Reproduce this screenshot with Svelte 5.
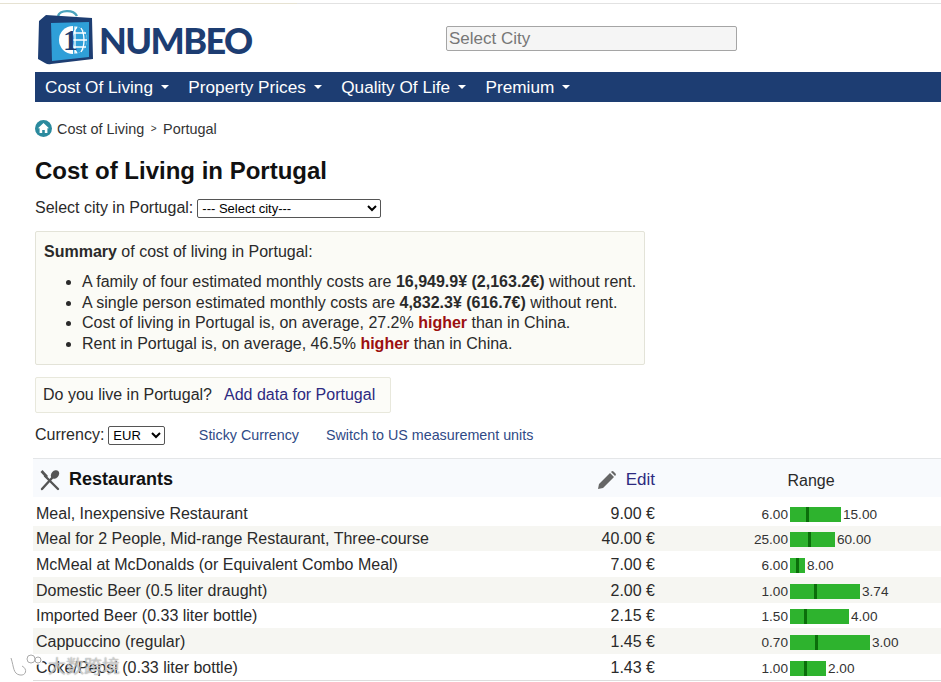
<script>
  const nav = ['Cost Of Living', 'Property Prices', 'Quality Of Life', 'Premium'];
  const rows = [
    { name: 'Meal, Inexpensive Restaurant', price: '9.00', lo: '6.00', hi: '15.00', w: 51, m: 16 },
    { name: 'Meal for 2 People, Mid-range Restaurant, Three-course', price: '40.00', lo: '25.00', hi: '60.00', w: 45, m: 18 },
    { name: 'McMeal at McDonalds (or Equivalent Combo Meal)', price: '7.00', lo: '6.00', hi: '8.00', w: 15, m: 6 },
    { name: 'Domestic Beer (0.5 liter draught)', price: '2.00', lo: '1.00', hi: '3.74', w: 70, m: 24 },
    { name: 'Imported Beer (0.33 liter bottle)', price: '2.15', lo: '1.50', hi: '4.00', w: 59, m: 14 },
    { name: 'Cappuccino (regular)', price: '1.45', lo: '0.70', hi: '3.00', w: 80, m: 25 },
    { name: 'Coke/Pepsi (0.33 liter bottle)', price: '1.43', lo: '1.00', hi: '2.00', w: 36, m: 14 }
  ];
  const bullets = [
    { a: 'A family of four estimated monthly costs are ', b: '16,949.9¥ (2,163.2€)', c: ' without rent.' },
    { a: 'A single person estimated monthly costs are ', b: '4,832.3¥ (616.7€)', c: ' without rent.' },
    { a: 'Cost of living in Portugal is, on average, 27.2% ', h: 'higher', c: ' than in China.' },
    { a: 'Rent in Portugal is, on average, 46.5% ', h: 'higher', c: ' than in China.' }
  ];
</script>

<div class="page">
  <div class="topline"></div>
  <header class="head">
    <div class="brand">
      <svg class="logo" width="60" height="60" viewBox="0 0 60 60" aria-hidden="true">
        <path d="M23 9 C25 3 38 2 42 9" fill="none" stroke="#4aa3bd" stroke-width="2.4"/>
        <path d="M4 14 L11 8 L57 11 L58 52 L16 57 Q13 58 10 56 L3 52 Z" fill="#1d3d72"/>
        <path d="M16 16 L54 15 L54 50 L17 54 Z" fill="#2f9fd8"/>
        <circle cx="38" cy="33" r="14" fill="#fff"/>
        <path d="M38 19 A14 14 0 0 1 38 47 Z" fill="#2f9fd8"/>
        <path d="M42 20 C36 27 36 39 42 46 M40 19.500 V46.500 M38 26 H51 M38 33 H52 M38 40 H51 M46 21 C50 27 50 39 46 45" fill="none" stroke="#fff" stroke-width="1.300"/>
        <text x="28" y="43" class="logo-one">1</text>
      </svg>
      <span class="wordmark">NUMBEO</span>
    </div>
    <div class="search">Select City</div>
  </header>

  <nav class="nav">
    {#each nav as item}
      <span class="nav-item">{item}<i class="caret"></i></span>
    {/each}
  </nav>

  <div class="crumbs">
    <svg width="17" height="17" viewBox="0 0 17 17" aria-hidden="true">
      <circle cx="8.500" cy="8.500" r="8.500" fill="#2b8a9e"/>
      <path d="M8.500 3 L14 8.200 H12.400 V13 H9.800 V10 H7.200 V13 H4.600 V8.200 H3 Z" fill="#fff"/>
    </svg>
    <span class="crumb">Cost of Living</span><span class="sep">&gt;</span><span>Portugal</span>
  </div>

  <h1>Cost of Living in Portugal</h1>

  <div class="city-line">
    <span>Select city in Portugal:</span>
    <select class="city"><option>--- Select city---</option></select>
  </div>

  <section class="summary">
    <div><b>Summary</b> of cost of living in Portugal:</div>
    <ul>
      {#each bullets as x}
        <li>{x.a}{#if x.b}<b>{x.b}</b>{/if}{#if x.h}<b class="hot">{x.h}</b>{/if}{x.c}</li>
      {/each}
    </ul>
  </section>

  <div class="live">Do you live in Portugal?<a href="#add">Add data for Portugal</a></div>

  <div class="currency">
    <span>Currency:</span>
    <select class="cur"><option>EUR</option></select>
    <a class="small first" href="#sticky">Sticky Currency</a>
    <a class="small" href="#us">Switch to US measurement units</a>
  </div>

  <section class="table">
    <div class="thead">
      <div class="title">
        <svg width="22" height="22" viewBox="0 0 22 22" aria-hidden="true">
          <path d="M3 20 L13 9" stroke="#555" stroke-width="2.400" stroke-linecap="round"/>
          <ellipse cx="16" cy="5.500" rx="3.600" ry="4.800" transform="rotate(42 16 5.500)" fill="#555"/>
          <path d="M19 20 L6 7" stroke="#555" stroke-width="2.400" stroke-linecap="round"/>
          <path d="M1.500 3 L7 9 L9 7 L3.500 1" fill="#555"/>
        </svg>
        <span>Restaurants</span>
      </div>
      <div class="edit">
        <svg width="20" height="20" viewBox="0 0 20 20" aria-hidden="true">
          <path d="M1 19 L2 14 L13 3 L17 7 L6 18 Z M14.500 1.500 Q15.500 .6 16.500 1.500 L18.500 3.500 Q19.400 4.500 18.500 5.500 L18 6 L14 2 Z" fill="#666"/>
        </svg>
        <a href="#edit">Edit</a>
      </div>
      <div class="range-head">Range</div>
    </div>
    {#each rows as r}
      <div class="row">
        <div class="name">{r.name}</div>
        <div class="price">{r.price} €</div>
        <div class="range">
          <span class="lo">{r.lo}</span>
          <span class="bar" style="width:{r.w}px"><i class="mark" style="margin-left:{r.m}px"></i></span>
          <span class="hi">{r.hi}</span>
        </div>
      </div>
    {/each}
  </section>

  <div class="wm">
    <svg width="38" height="26" viewBox="0 0 38 26" aria-hidden="true">
      <path d="M3 6 C6 15 5 22 12 23 C18 24 20 17 14 14 M19 7 a4 4 0 1 0 8 0 a4 4 0 1 0 -8 0 M27 8 a3 3 0 1 0 6 0 a3 3 0 1 0 -6 0" fill="none" stroke="#fff" stroke-width="3.500"/>
      <path d="M3 6 C6 15 5 22 12 23 C18 24 20 17 14 14 M19 7 a4 4 0 1 0 8 0 a4 4 0 1 0 -8 0 M27 8 a3 3 0 1 0 6 0 a3 3 0 1 0 -6 0" fill="none" stroke="#aaa" stroke-width="1"/>
    </svg>
    <span>大数跨境</span>
  </div>
</div>

<style>
  :global(body) { margin: 0; background: #fff; }
  .page { position: relative; width: 941px; height: 682px; overflow: hidden; font-family: "Liberation Sans", Arial, sans-serif; font-size: 16px; color: #2a2a2a; }
  .topline { height: 1px; margin-top: 3px; background: linear-gradient(90deg, #e6e2d2 297px, #e2e2e2 297px); }
  .head { display: flex; height: 68px; padding-left: 35px; }
  .brand { display: flex; align-items: flex-start; width: 411px; }
  .logo { margin-top: 3px; }
  .logo-one { font-family: "Liberation Serif", serif; font-size: 30px; font-weight: 700; fill: #1d3d72; }
  .wordmark { font-family: Lato, sans-serif; font-weight: 900; font-size: 36px; color: #1d3d72; margin: 14px 0 0 4px; line-height: 44px; letter-spacing: -1.6px; }
  .search { box-sizing: border-box; width: 291px; height: 25px; margin-top: 22px; border: 1px solid #a5a5a5; background: #f5f5f5; border-radius: 2px; color: #777; font-size: 17px; line-height: 23px; padding-left: 2px; }
  .nav { margin-left: 35px; height: 30px; background: #1d3d72; display: flex; gap: 19.4px; padding-left: 10px; color: #fff; font-size: 17.2px; line-height: 30px; }
  .nav-item { display: flex; align-items: center; }
  .caret { margin-left: 8px; width: 0; height: 0; border: 4px solid transparent; border-top-color: #fff; border-bottom-width: 0; }
  .crumbs { display: flex; align-items: center; height: 17px; margin: 18px 0 0 35px; font-size: 14.4px; color: #333; }
  .crumb { margin-left: 5px; }
  .sep { margin: 0 6.5px; font-size: 10px; }
  h1 { margin: 20px 0 0 35px; font-size: 24px; line-height: 28px; color: #111; font-weight: 700; }
  .city-line { display: flex; align-items: center; gap: 4px; margin: 13px 0 0 35px; height: 20px; }
  .city { width: 184px; height: 19px; font-size: 13px; font-family: inherit; background: #fff; border: 1px solid #555; border-radius: 2px; padding: 0; }
  .summary { box-sizing: border-box; width: 610px; height: 134px; margin: 13px 0 0 35px; border: 1px solid #e3e3d8; background: #fbfbf6; border-radius: 2px; padding: 11px 2px 0 8px; }
  ul { margin: 11px 0 0; padding-left: 38px; }
  li { line-height: 20.7px; white-space: nowrap; }
  .hot { color: #9c1010; }
  .live { box-sizing: border-box; width: 356px; height: 36px; margin: 12px 0 0 35px; border: 1px solid #e8e8dc; background: #fcfcf8; border-radius: 2px; padding: 0 7px; line-height: 33px; }
  .live a { margin-left: 12px; }
  a { color: #2d2a80; text-decoration: none; }
  .currency { display: flex; align-items: center; height: 20px; margin: 12px 0 0 35px; }
  .cur { width: 57px; height: 19px; margin-left: 4px; font-size: 13px; font-family: inherit; background: #fff; border: 1px solid #555; border-radius: 2px; padding: 0; }
  .small { font-size: 14.3px; color: #2f4a86; margin-left: 27px; }
  .small.first { margin-left: 33.5px; }
  .table { position: absolute; left: 33px; top: 458px; width: 908px; border-bottom: 1px solid #ddd; }
  .thead { box-sizing: border-box; display: grid; grid-template-columns: 530px 92px 1fr; height: 39px; padding-top: 3px; background: #f8fafd; border-top: 1px solid #e4e6e8; align-items: center; margin-bottom: 3px; }
  .title { display: flex; align-items: center; gap: 8px; padding-left: 6px; font-size: 18px; font-weight: 700; color: #111; }
  .edit { display: flex; justify-content: flex-end; align-items: center; gap: 9px; font-size: 17px; white-space: nowrap; }
  .range-head { text-align: center; padding-left: 26px; padding-top: 2px; }
  .row { box-sizing: border-box; display: grid; grid-template-columns: 530px 92px 1fr; height: 25.7px; padding-top: 1.6px; align-items: center; }
  .row:nth-child(odd) { background: #f6f6f2; }
  .name { padding-left: 3px; white-space: nowrap; }
  .price { text-align: right; }
  .range { display: flex; align-items: center; font-size: 13.6px; padding-top: 1px; }
  .lo { width: 133px; text-align: right; color: #333; }
  .bar { display: block; height: 15px; margin: 0 2px; background: #2eb32e; }
  .mark { display: block; width: 3px; height: 15px; background: #0b6e0b; }
  .hi { color: #333; }
  .wm { position: absolute; left: 8px; top: 652px; display: flex; align-items: center; gap: 2px; color: rgba(255,255,255,.55); text-shadow: 0 0 1px rgba(90,90,90,.8); font-size: 18px; font-family: "Noto Sans CJK SC", sans-serif; }
</style>
